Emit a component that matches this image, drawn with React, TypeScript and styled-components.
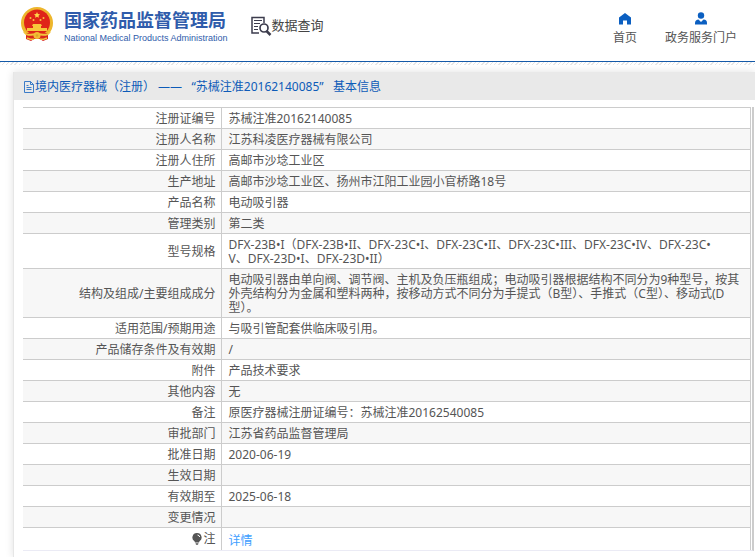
import React from "react";
import styled, { createGlobalStyle } from "styled-components";

const GlobalStyle = createGlobalStyle`
  * { box-sizing: border-box; }
  body {
    margin: 0;
    background: #fff;
    color: #555;
    font: 12px/14px "Noto Sans", "Noto Sans CJK SC", sans-serif;
    overflow: hidden;
  }
`;

const Header = styled.header`
  display: flex;
  align-items: flex-start;
  height: 62px;
  padding: 0 18px 0 21px;
  border-bottom: 1px solid #1459a8;
`;

const Hatch = styled.div`
  height: 3px;
  background: repeating-linear-gradient(135deg, #e6e6e6 0 1px, #fff 1px 3px);
`;

const Brand = styled.a`
  display: flex;
  gap: 11px;
  padding-top: 7px;
  color: #2f5cab;
  text-decoration: none;
`;

const BrandText = styled.div`
  display: flex;
  flex-direction: column;
  padding-top: 2px;
  white-space: nowrap;
`;

const BrandName = styled.span`
  font-size: 18px;
  line-height: 22px;
  font-weight: 700;
`;

const BrandEnglish = styled.span`
  font: 400 9px/14px "Liberation Sans", sans-serif;
`;

const Section = styled.h1`
  display: flex;
  margin: 16px 0 0 23px;
  color: #444;
  font-size: 13px;
  line-height: 18px;
  font-weight: 400;
  white-space: nowrap;
`;

const Nav = styled.nav`
  display: flex;
  gap: 28px;
  margin-left: auto;
  padding-top: 12px;
`;

const NavLink = styled.a`
  display: flex;
  flex-direction: column;
  align-items: center;
  gap: 6px;
  color: #555;
  text-decoration: none;
  white-space: nowrap;
`;

const Panel = styled.main`
  margin: 7px 0 0 13px;
  border-left: 1px solid #e6e6e6;
  box-shadow: 0 0 8px rgba(0, 0, 0, 0.12);
  min-height: calc(100vh - 72px);
`;

const PanelTitle = styled.h2`
  display: flex;
  align-items: center;
  gap: 1px;
  height: 28px;
  margin: 0;
  padding: 1px 10px 0;
  background: #e9e9e9;
  color: #0d5bb8;
  font-size: 12px;
  line-height: 14px;
  font-weight: 400;
  white-space: pre;
`;

const TableFrame = styled.div`
  margin: 7px 1px 0 9px;
  padding-right: 1px;
  border-right: 2px solid #ccc;
  border-bottom: 1px solid #ebebf5;
`;

const Table = styled.table`
  width: 100%;
  border-collapse: collapse;
  table-layout: fixed;
  border-top: 1px solid #ccc;
  border-right: 1px solid #ccc;
`;

const LabelColumn = styled.col`
  width: 198px;
`;

const Row = styled.tr`
  border-bottom: 1px solid #ccc;
  &:nth-child(even) { background: #f7f7f7; }
  &:last-child { border-bottom: 0; }
`;

const Label = styled.th`
  padding: 4px 5px 2px;
  border-right: 1px solid #ccc;
  font-weight: 400;
  text-align: right;
  vertical-align: middle;
`;

const Value = styled.td`
  height: 21px;
  padding: 4px 6px 2px 7px;
  vertical-align: middle;
  white-space: pre-line;
`;

const NoteLabel = styled.span`
  display: inline-flex;
  align-items: center;
  gap: 1px;
`;

const DetailLink = styled.a`
  display: block;
  padding-top: 2px;
  color: #409eff;
  text-decoration: none;
`;

const Emblem = () => (
  <svg width="32" height="35" viewBox="0 0 32 35" aria-hidden="true">
    <circle cx="16" cy="16" r="16" fill="#edb62c" />
    <path d="M5 26h22v6l-5 2-3-2h-6l-3 2-5-2z" fill="#d9251c" />
    <circle cx="16" cy="15.500" r="13" fill="#df2419" />
    <path d="m16 5 .9 1.900 2.100.3-1.500 1.500.4 2.100L16 9.800l-1.900 1 .4-2.100L13 7.200l2.100-.3z" fill="#ffd84a" />
    <g fill="#f7c63b">
      <circle cx="9.500" cy="11" r="1" /><circle cx="12.500" cy="13" r="1" />
      <circle cx="19.500" cy="13" r="1" /><circle cx="22.500" cy="11" r="1" />
      <path d="M12 17h8l1 2h-1v2h6v3H6v-3h6v-2h-1z" />
    </g>
    <path d="M3 25c4 5 8 2 13 2s9 3 13-2" fill="none" stroke="#f2c33c" strokeWidth="2" />
    <circle cx="16" cy="28.500" r="3.500" fill="#f2bd34" />
    <circle cx="16" cy="28.500" r="1.300" fill="#e0a52a" />
    <path d="M6 31c3 1 5 2 7 1m13-1c-3 1-5 2-7 1" fill="none" stroke="#f2c33c" strokeWidth="1.500" />
  </svg>
);

const SearchDocument = () => (
  <svg width="21" height="20" viewBox="0 0 21 20" fill="none" stroke="#3c3c4d" aria-hidden="true">
    <path d="M8 17H1V1.500h12V7" strokeWidth="1.500" />
    <path d="M3 4.500h8M3 7.500h6M3 10.500h4M3 13.500h4" />
    <circle cx="13" cy="12" r="4" strokeWidth="1.700" />
    <path d="m15.500 15 4 4" strokeWidth="2.500" />
  </svg>
);

const Home = () => (
  <svg width="14" height="13" viewBox="0 0 14 13" aria-hidden="true">
    <path d="M7 1 1 5.500V12.500h4V8.500h4v4h4v-7z" fill="#0b5fc1" />
  </svg>
);

const Person = () => (
  <svg width="14" height="13" viewBox="0 0 14 13" fill="#0b5fc1" aria-hidden="true">
    <circle cx="7" cy="3.500" r="3.200" />
    <path d="M1 12.500V11c0-2 1.500-3.500 3.500-3.500L7 10l2.500-2.500C12 7.500 13 9 13 11v1.500z" />
  </svg>
);

const Document = () => (
  <svg width="10" height="12" viewBox="0 0 10 12" fill="none" stroke="#3c7cc8" aria-hidden="true">
    <path d="M.5.5h6l3 3v8h-9zM6.500.5v3h3M2.500 4.500h2M2.500 6.500h5M2.500 8.500h5" />
  </svg>
);

const Bulb = () => (
  <svg width="10" height="12" viewBox="0 0 10 12" aria-hidden="true">
    <path d="M5 0a4.500 4.500 0 0 1 2.500 8.300L7 9.500H3l-.5-1.200A4.500 4.500 0 0 1 5 0M3.500 10.300h3L6 11.800H4z" fill="#555" />
    <path d="M5.500 2q2 .3 2.200 2" fill="none" stroke="#fff" />
  </svg>
);

const records: [string, string][] = [
  ["注册证编号", "苏械注准20162140085"],
  ["注册人名称", "江苏科凌医疗器械有限公司"],
  ["注册人住所", "高邮市沙埝工业区"],
  ["生产地址", "高邮市沙埝工业区、扬州市江阳工业园小官桥路18号"],
  ["产品名称", "电动吸引器"],
  ["管理类别", "第二类"],
  ["型号规格", "DFX-23B•I（DFX-23B•II、DFX-23C•I、DFX-23C•II、DFX-23C•III、DFX-23C•IV、DFX-23C•\nV、DFX-23D•I、DFX-23D•II）"],
  ["结构及组成/主要组成成分", "电动吸引器由单向阀、调节阀、主机及负压瓶组成；电动吸引器根据结构不同分为9种型号，按其外壳结构分为金属和塑料两种，按移动方式不同分为手提式（B型）、手推式（C型）、移动式(D型）。"],
  ["适用范围/预期用途", "与吸引管配套供临床吸引用。"],
  ["产品储存条件及有效期", "/"],
  ["附件", "产品技术要求"],
  ["其他内容", "无"],
  ["备注", "原医疗器械注册证编号：苏械注准20162540085"],
  ["审批部门", "江苏省药品监督管理局"],
  ["批准日期", "2020-06-19"],
  ["生效日期", ""],
  ["有效期至", "2025-06-18"],
  ["变更情况", ""],
];

export default function App() {
  return (
    <>
      <GlobalStyle />
      <Header>
        <Brand href="#">
          <Emblem />
          <BrandText>
            <BrandName>国家药品监督管理局</BrandName>
            <BrandEnglish>National Medical Products Administration</BrandEnglish>
          </BrandText>
        </Brand>
        <Section><SearchDocument />数据查询</Section>
        <Nav>
          <NavLink href="#"><Home />首页</NavLink>
          <NavLink href="#"><Person />政务服务门户</NavLink>
        </Nav>
      </Header>
      <Hatch />
      <Panel>
        <PanelTitle><Document />境内医疗器械（注册） ——   “苏械注准20162140085”   基本信息</PanelTitle>
        <TableFrame>
          <Table>
            <colgroup><LabelColumn /><col /></colgroup>
            <tbody>
              {records.map(([label, value]) => (
                <Row key={label}>
                  <Label scope="row">{label}</Label>
                  <Value>{value}</Value>
                </Row>
              ))}
              <Row>
                <Label scope="row"><NoteLabel><Bulb />注</NoteLabel></Label>
                <Value><DetailLink href="#">详情</DetailLink></Value>
              </Row>
            </tbody>
          </Table>
        </TableFrame>
      </Panel>
    </>
  );
}
